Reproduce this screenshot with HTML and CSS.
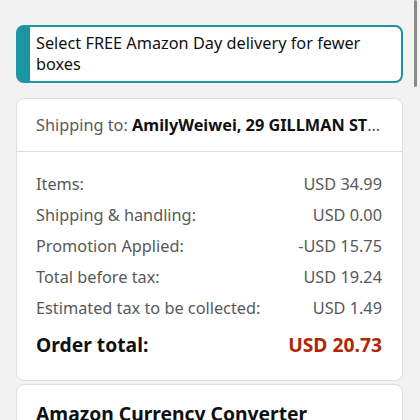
FILE: index.html
```html
<!DOCTYPE html>
<html>
<head>
<meta charset="utf-8">
<link rel="stylesheet" href="styles.css">
</head>
<body>
<div class="scrollbar"></div>
<main class="page">
  <div class="alert">Select FREE Amazon Day delivery for fewer boxes</div>
  <section class="card">
    <div class="ship">Shipping to: <b>AmilyWeiwei, 29 GILLMAN STREET, SINGAPORE</b></div>
    <div class="summary">
      <div class="row"><span>Items:</span><span>USD 34.99</span></div>
      <div class="row"><span>Shipping &amp; handling:</span><span>USD 0.00</span></div>
      <div class="row"><span>Promotion Applied:</span><span>-USD 15.75</span></div>
      <div class="row"><span>Total before tax:</span><span>USD 19.24</span></div>
      <div class="row"><span>Estimated tax to be collected:</span><span>USD 1.49</span></div>
      <div class="row total"><span>Order total:</span><span class="price">USD 20.73</span></div>
    </div>
  </section>
  <section class="card card2">
    <h2 class="title">Amazon Currency Converter</h2>
  </section>
</main>
</body>
</html>
```
FILE: styles.css
```css
html, body {
  margin: 0;
  padding: 0;
  background: #f2f2f2;
  font-family: "Noto Sans", "Open Sans", sans-serif;
  color: #0f1111;
  overflow: hidden;
}
.scrollbar {
  position: absolute;
  top: 0;
  left: 414px;
  width: 3px;
  height: 87px;
  background: #8a8a8a;
  border-radius: 2px;
}
.page {
  padding: 25px 17px 0 16px;
}
.alert {
  background: #fff;
  border: 2px solid #1b94a4;
  border-left: 14px solid #1b94a4;
  border-radius: 8px;
  padding: 6px 10px 6px 6px;
  font-size: 16.3px;
  line-height: 21px;
  color: #0f1111;
}
.card {
  margin-top: 15px;
  background: #fff;
  border: 1px solid #dcdede;
  border-radius: 8px;
}
.card2 {
  margin-top: 3px;
}
.ship {
  height: 52px;
  line-height: 52px;
  padding: 0 20px 0 19px;
  font-size: 16.3px;
  color: #565959;
  white-space: nowrap;
  overflow: hidden;
  text-overflow: ellipsis;
  border-bottom: 1px solid #dcdede;
}
.ship b {
  color: #0f1111;
  font-weight: 700;
}
.summary {
  padding: 17px 20px 18px 19px;
}
.row {
  display: flex;
  justify-content: space-between;
  font-size: 16.3px;
  line-height: 31px;
  color: #565959;
}
.row.total {
  margin-top: 4px;
  line-height: 34px;
  font-size: 19.3px;
  font-weight: 700;
  color: #0f1111;
}
.price {
  color: #b12704;
}
.title {
  margin: 0;
  padding: 14px 19px;
  font-size: 19.3px;
  line-height: 30px;
  font-weight: 700;
}
```
